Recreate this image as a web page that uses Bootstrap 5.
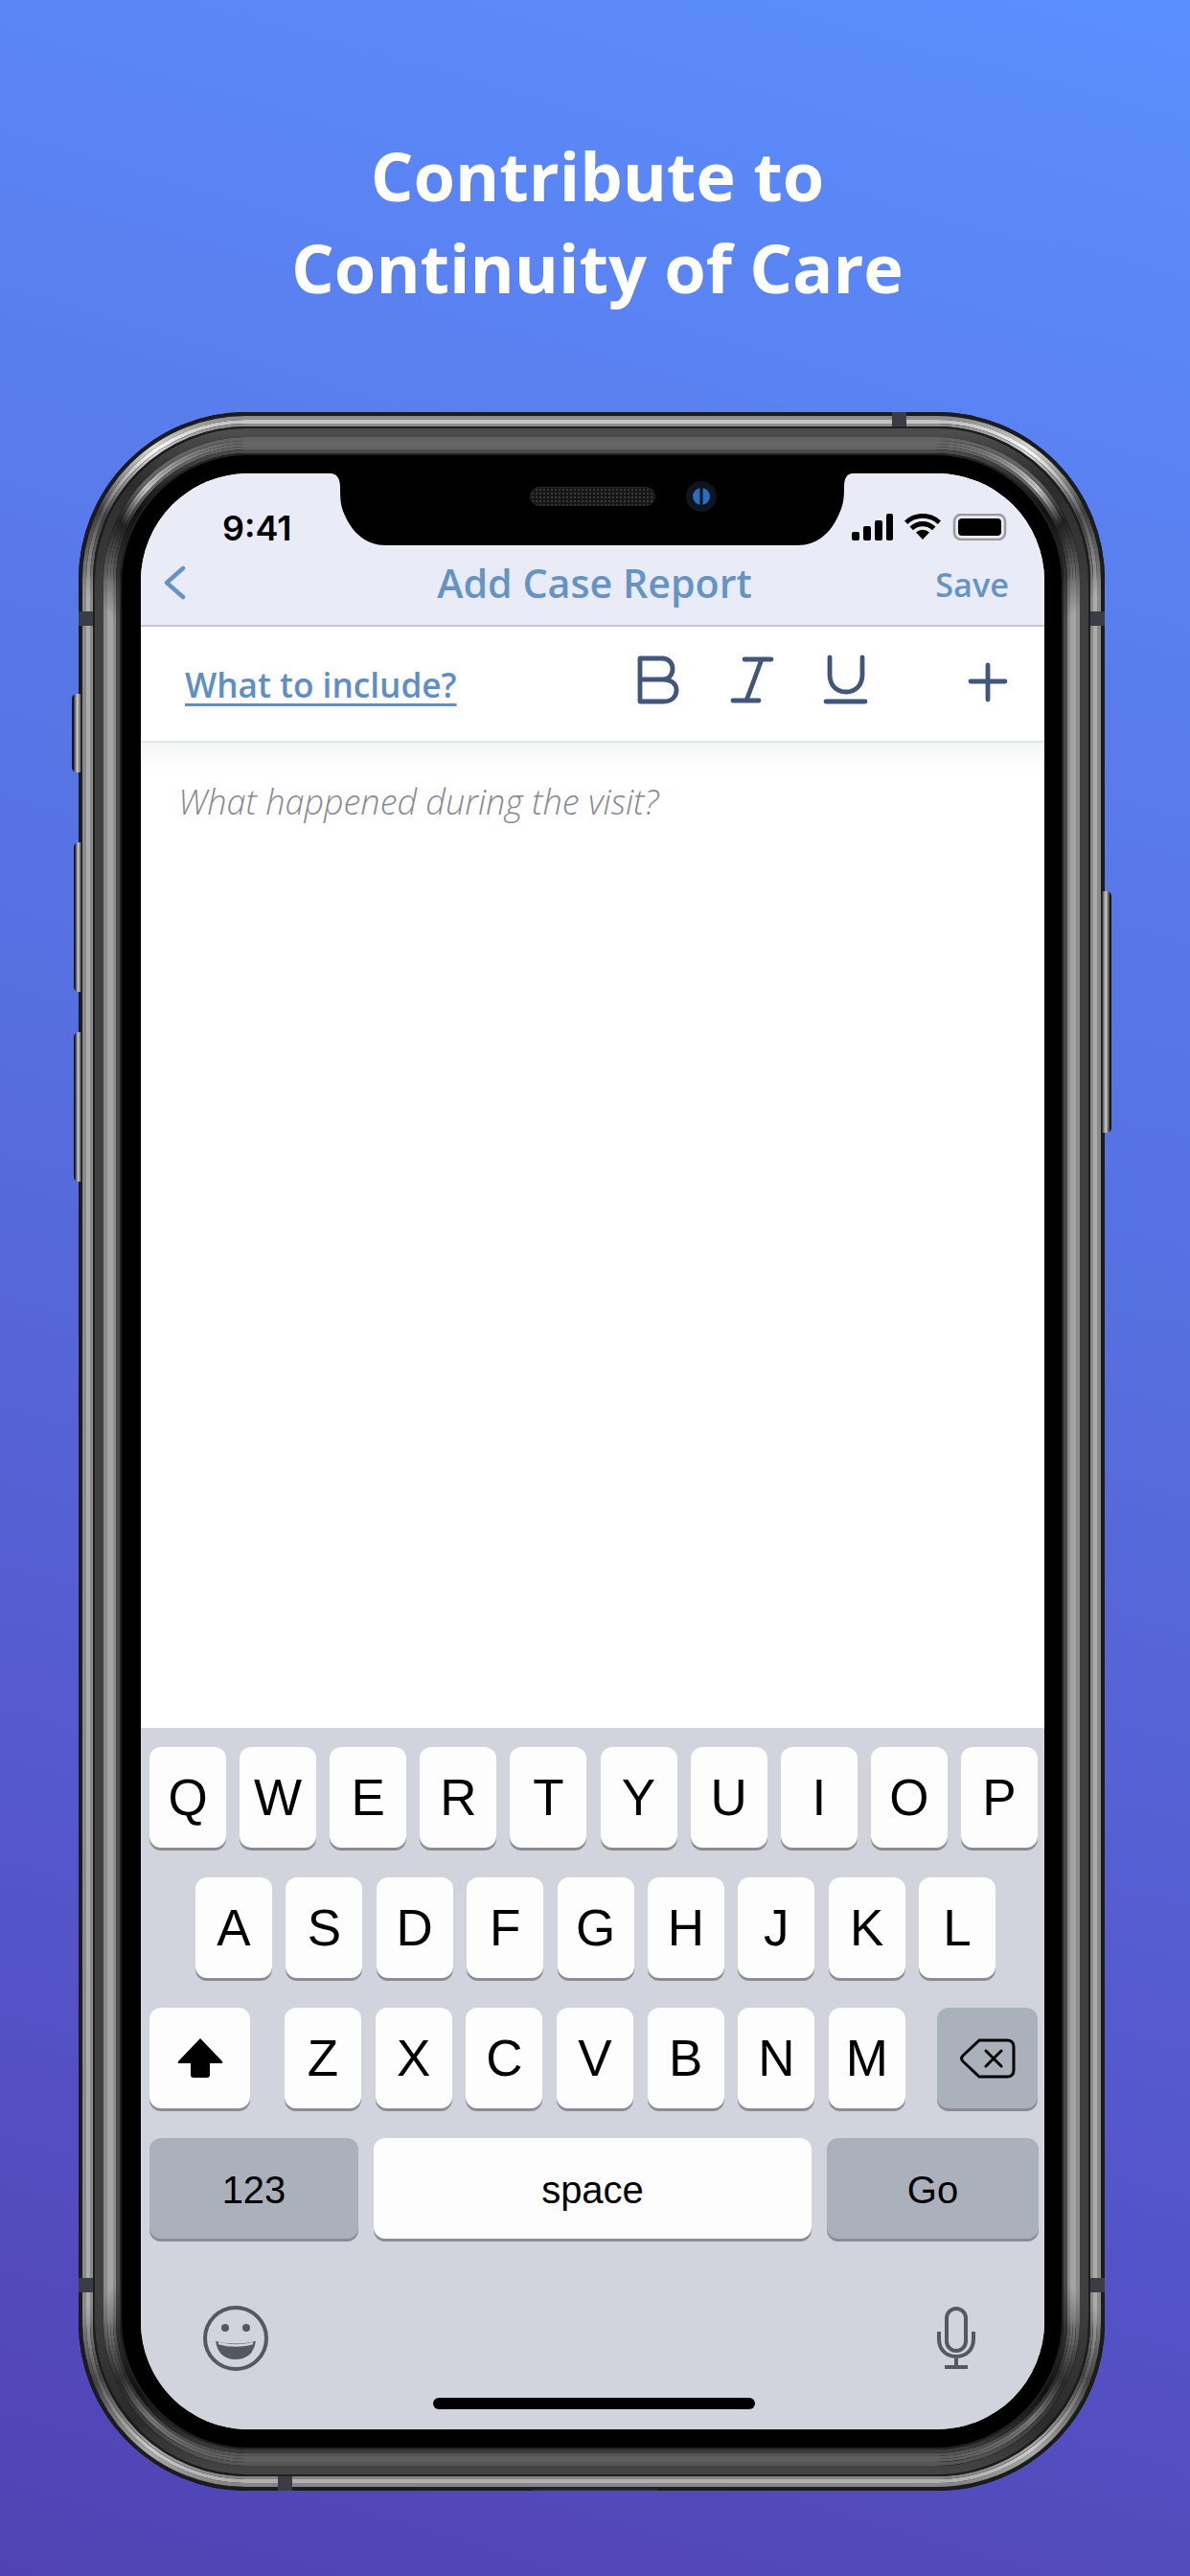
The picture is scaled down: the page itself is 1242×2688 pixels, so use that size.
<!doctype html>
<html lang="en"><head><meta charset="utf-8"><title>Add Case Report</title>
<link href="https://cdn.jsdelivr.net/npm/bootstrap@5.3.0/dist/css/bootstrap.min.css" rel="stylesheet">
<style>
html,body{margin:0;width:1242px;height:2688px;overflow:hidden}
body{background:linear-gradient(196deg,#5b8fff 0%,#5a7eee 22%,#5670e0 45%,#5558cd 72%,#5042b3 100%);font-family:"Open Sans",sans-serif}
.promo-title{padding:135px 0 0 5px;height:430px;margin:0;color:#fff;font:700 70.3px/96px "Open Sans",sans-serif;width:1242px}
.phone{width:1071px;height:2169px;margin-left:82px;padding:64px 63px 64px 65px}
.bezel{left:0;top:0}
.side-btn{background:linear-gradient(90deg,#161616 0 14%,#555 28%,#c4c4c4 55%,#8e8e8e 78%,#1c1c1c);border-radius:5px 0 0 5px}
.sb-a{left:-7px;top:294px;width:10px;height:82px}
.sb-b{left:-5px;top:449px;width:8px;height:156px}
.sb-c{left:-5px;top:647px;width:8px;height:156px}
.sb-d{right:-7px;top:500px;width:10px;height:252px;background:linear-gradient(270deg,#161616 0 14%,#555 28%,#c4c4c4 55%,#8e8e8e 78%,#1c1c1c);border-radius:0 5px 5px 0}
.screen{width:943px;height:2041px;border-radius:112px;overflow:hidden;background:#fff;color:#000}
.status-row{height:76px;background:#e9ecf7;padding:42px 39px 0 85px;font:600 36px/30px Inter,sans-serif}
.notch{left:198px;top:0;width:545px}
.speaker{left:406px;top:14px;width:131px;height:20px;border-radius:10px;border:1px solid #262626;background:#161616 radial-gradient(circle,#3a3a3a 0 1px,transparent 1.2px) 0 0/4px 4px}
.cam{left:569px;top:8px}
.title-row{height:84px;background:#e9ecf7;border-bottom:2px solid #c8c9ce;padding:0 37px 6px 23px;color:#6594c4;display:grid;grid-template-columns:1fr auto 1fr;align-items:center}
.title-row .nav-h{font:600 41.2px/56px "Open Sans",sans-serif;margin:0 0 0 18px}
.save-t{font:600 34.3px/46px "Open Sans",sans-serif;margin-top:4px;justify-self:end}
.tool-row{height:121px;border-bottom:2px solid #e3e5ea;padding:0 37px 0 46px;background:#fff}
.incl{color:#5f8fc2;font:600 35.2px/48px "Open Sans",sans-serif;text-decoration-thickness:3px;text-underline-offset:6px;margin-top:1px}
.tool-ico{stroke:#42557a;fill:none;stroke-width:4.8;stroke-linecap:round;stroke-linejoin:round;margin-bottom:7px}
.editor{height:1028px;background:linear-gradient(180deg,#f3f4f6,#fff 28px);padding:38px 0 0 39px;color:#878991;font:italic 300 36px/48px "Open Sans",sans-serif}
.kbd{height:732px;background:#d1d4dc;padding-top:20px;color:#000;font-family:"Liberation Sans",sans-serif}
.k-row{display:flex;justify-content:space-between;height:105px;margin-bottom:31px}
.r1{padding:0 7px 0 9px}.r2{padding:0 51px 0 57px}.r3{padding:0 7px 0 9px}.r4{padding:0 6px 0 9px}
.kk{width:80px;height:105px;border-radius:12px;background:#fdfdfe;box-shadow:0 3px 0 #8b8c91;font-size:53px;line-height:1;display:flex;align-items:center;justify-content:center}
.kk.dk{background:#abb1bb}
.kk.w105{width:105px}
.kk.w218,.kk.w457,.kk.w221{font-size:40px;padding-top:2px}
.kk.w218{width:218px}
.kk.w457{width:457px}
.kk.w221{width:221px}
.gap-fill{display:flex;justify-content:space-between;width:648px;margin-left:3px}
.kb-foot{padding:38px 72px 0 64px;height:100px}
.home-bar{left:305px;bottom:21px;width:336px;height:12px;border-radius:6px;background:#000}
.foot-ico{fill:none;stroke:#545860;stroke-width:4}
</style></head>
<body>
<h1 class="promo-title text-center">Contribute to<br>Continuity of Care</h1>
<div class="phone position-relative">
<svg class="bezel position-absolute" width="1071" height="2169" viewBox="0 0 1071 2169" fill="none">
<defs>
<linearGradient id="s1" x1="0" y1="0" x2="0" y2="1"><stop offset="0" stop-color="#8c8c8c"/><stop offset=".014" stop-color="#d8d8d8"/><stop offset=".045" stop-color="#3e3e3e"/><stop offset=".085" stop-color="#8a8a8a"/><stop offset=".915" stop-color="#8a8a8a"/><stop offset=".95" stop-color="#444"/><stop offset=".985" stop-color="#aaa"/><stop offset="1" stop-color="#858585"/></linearGradient>
<linearGradient id="s2" x1="0" y1="0" x2="0" y2="1"><stop offset="0" stop-color="#c4c4c4"/><stop offset=".014" stop-color="#fff"/><stop offset=".045" stop-color="#555"/><stop offset=".085" stop-color="#ababab"/><stop offset=".915" stop-color="#ababab"/><stop offset=".95" stop-color="#555"/><stop offset=".985" stop-color="#ccc"/><stop offset="1" stop-color="#b0b0b0"/></linearGradient>
<linearGradient id="b1" x1="0" y1="0" x2="0" y2="1"><stop offset="0" stop-color="#4c4c4c"/><stop offset=".025" stop-color="#2c2c2c"/><stop offset=".085" stop-color="#404040"/><stop offset=".915" stop-color="#404040"/><stop offset=".975" stop-color="#2a2a2a"/><stop offset="1" stop-color="#444"/></linearGradient>
<linearGradient id="b2" x1="0" y1="0" x2="0" y2="1"><stop offset="0" stop-color="#666"/><stop offset=".022" stop-color="#c8c8c8"/><stop offset=".04" stop-color="#222"/><stop offset=".085" stop-color="#a4a4a4"/><stop offset=".915" stop-color="#a4a4a4"/><stop offset=".96" stop-color="#333"/><stop offset=".98" stop-color="#777"/><stop offset="1" stop-color="#5e5e5e"/></linearGradient>
<linearGradient id="b3" x1="0" y1="0" x2="0" y2="1"><stop offset="0" stop-color="#626262"/><stop offset=".022" stop-color="#666"/><stop offset=".04" stop-color="#222"/><stop offset=".085" stop-color="#8c8c8c"/><stop offset=".915" stop-color="#8c8c8c"/><stop offset=".96" stop-color="#2a2a2a"/><stop offset="1" stop-color="#565656"/></linearGradient>
<linearGradient id="b4" x1="0" y1="0" x2="0" y2="1"><stop offset="0" stop-color="#4a4a4a"/><stop offset=".03" stop-color="#111"/><stop offset=".085" stop-color="#4a4a4a"/><stop offset=".915" stop-color="#4a4a4a"/><stop offset=".97" stop-color="#111"/><stop offset="1" stop-color="#3c3c3c"/></linearGradient>
</defs>
<rect x="0" y="0" width="1071" height="2169" rx="175" fill="#000"/>
<rect x="2" y="2" width="1067" height="2165" rx="173" stroke="#1c1c1e" stroke-width="4"/>
<rect x="6" y="6" width="1059" height="2157" rx="169" stroke="url(#s1)" stroke-width="4"/>
<rect x="10" y="10" width="1051" height="2149" rx="165" stroke="url(#s2)" stroke-width="4"/>
<rect x="13.5" y="13.5" width="1044" height="2142" rx="162" stroke="url(#s1)" stroke-width="3"/>
<rect x="16" y="16" width="1039" height="2137" rx="159" stroke="#1e1e1e" stroke-width="2"/>
<rect x="21.5" y="21.5" width="1028" height="2126" rx="154" stroke="url(#b1)" stroke-width="9"/>
<rect x="28" y="28" width="1015" height="2113" rx="148" stroke="url(#b3)" stroke-width="4"/>
<rect x="31.5" y="31.5" width="1008" height="2106" rx="145" stroke="url(#b2)" stroke-width="3"/>
<rect x="34.5" y="34.5" width="1002" height="2100" rx="142" stroke="url(#b2)" stroke-width="3"/>
<rect x="37.5" y="37.5" width="996" height="2094" rx="139" stroke="url(#b3)" stroke-width="3"/>
<rect x="41" y="41" width="989" height="2087" rx="136" stroke="url(#b4)" stroke-width="4"/>
<rect x="44" y="44" width="983" height="2081" rx="133" stroke="#222" stroke-width="2"/>
<g fill="#3a3d45"><rect x="0" y="208" width="15" height="15"/><rect x="1056" y="208" width="15" height="15"/><rect x="0" y="1947" width="15" height="15"/><rect x="1056" y="1947" width="15" height="15"/><rect x="849" y="0" width="15" height="15"/><rect x="208" y="2154" width="15" height="15"/></g>
<rect x="474" y="2167" width="130" height="2" fill="#2a2a30"/>
</svg>
<div class="side-btn position-absolute sb-a"></div>
<div class="side-btn position-absolute sb-b"></div>
<div class="side-btn position-absolute sb-c"></div>
<div class="side-btn position-absolute sb-d"></div>

<div class="screen position-relative">
  <div class="status-row d-flex justify-content-between align-items-start">
    <span>9:41</span>
    <svg width="162" height="28" viewBox="0 0 162 28" fill="#000">
      <rect x="0" y="19" width="8" height="9" rx="2"/><rect x="12" y="13" width="8" height="15" rx="2"/><rect x="24" y="7" width="8" height="21" rx="2"/><rect x="36" y="0" width="7" height="28" rx="2"/>
      <path d="M74 27l-7-7.500a10 10 0 0 1 14 0zM60.500 13.500a19.500 19.500 0 0 1 27 0l-3.500 3.700a14.500 14.500 0 0 0-20 0zM55 7.500a27.500 27.500 0 0 1 38 0l-3.200 3.500a23 23 0 0 0-31.600 0z"/>
      <rect x="107" y="1" width="53" height="26" rx="7" fill="none" stroke="#9a9aa0" stroke-width="2.500"/><rect x="111" y="5" width="45" height="18" rx="4"/><path d="M162 10c2 1 2.500 3 2.500 4s-.5 3-2.500 4z" fill="#9a9aa0"/>
    </svg>
  </div>
  <svg class="notch position-absolute" width="545" height="76" viewBox="0 0 545 76" fill="#000"><path d="M0 0H545C539 0 536 5 536 14C536 30 534 35 530 44C522 62 508 75 487 75H58C37 75 23 62 15 44C11 35 10 30 10 14C10 5 6 0 0 0Z"/></svg>
  <div class="speaker position-absolute"></div>
  <svg class="cam position-absolute" width="32" height="32" viewBox="0 0 32 32"><circle cx="16" cy="16" r="16" fill="#0e1520"/><circle cx="16" cy="16" r="9" fill="#2a6fbd"/><rect x="14.500" y="7" width="3" height="18" fill="#0a1220"/></svg>
  <nav class="title-row">
    <svg width="24" height="36" viewBox="0 0 24 36" fill="none"><path d="M21 3L4 18l17 15" stroke="#6594c4" stroke-width="4.500" stroke-linecap="round" stroke-linejoin="round"/></svg>
    <h2 class="nav-h">Add Case Report</h2>
    <span class="save-t">Save</span>
  </nav>
  <div class="tool-row d-flex justify-content-between align-items-center">
    <a class="incl" href="#">What to include?</a>
    <svg width="388" height="56" viewBox="0 0 388 56" class="tool-ico">
      <path d="M3 50V5H26C33 5 37 10 37 16C37 22 33 27 27 27H3M27 27C36 27 41 32 41 38C41 45 36 50 28 50H3"/>
      <path d="M112 6H140M130 6L114 49M100 49H127"/>
      <path d="M201 4V22C201 33 208 40 218 40C228 40 235 33 235 22V4M197 50H238"/>
      <path d="M348 29H384M366 12V48"/>
    </svg>
  </div>
  <div class="editor">What happened during the visit?</div>
  <div class="kbd position-relative">
    <div class="k-row r1"><div class="kk">Q</div><div class="kk">W</div><div class="kk">E</div><div class="kk">R</div><div class="kk">T</div><div class="kk">Y</div><div class="kk">U</div><div class="kk">I</div><div class="kk">O</div><div class="kk">P</div></div>
    <div class="k-row r2"><div class="kk">A</div><div class="kk">S</div><div class="kk">D</div><div class="kk">F</div><div class="kk">G</div><div class="kk">H</div><div class="kk">J</div><div class="kk">K</div><div class="kk">L</div></div>
    <div class="k-row r3">
      <div class="kk w105"><svg width="48" height="42" viewBox="0 0 48 42" fill="#000"><path d="M24 0L47 24Q48 26 46 26H34V38Q34 41 31 41H17Q14 41 14 38V26H2Q0 26 1 24Z"/></svg></div>
      <div class="gap-fill"><div class="kk">Z</div><div class="kk">X</div><div class="kk">C</div><div class="kk">V</div><div class="kk">B</div><div class="kk">N</div><div class="kk">M</div></div>
      <div class="kk dk w105"><svg width="58" height="42" viewBox="0 0 58 42" fill="none" stroke="#000" stroke-width="3" stroke-linejoin="round" stroke-linecap="round"><path d="M20 2H49Q56 2 56 9V33Q56 40 49 40H20L3 24Q0 21 3 18ZM27 13L43 29M43 13L27 29"/></svg></div>
    </div>
    <div class="k-row r4"><div class="kk dk w218">123</div><div class="kk w457">space</div><div class="kk dk w221">Go</div></div>
    <div class="kb-foot d-flex justify-content-between align-items-start">
      <svg width="70" height="70" viewBox="0 0 70 70" class="foot-ico"><circle cx="35" cy="35" r="32"/><circle cx="24" cy="24" r="4" fill="#545860" stroke="none"/><circle cx="46" cy="24" r="4" fill="#545860" stroke="none"/><path d="M14 38Q35 43 56 38Q53 57 35 57Q17 57 14 38Z" fill="#545860" stroke="none"/><path d="M17 40Q35 45 53 40" stroke="#d1d4dc" stroke-width="2.500"/></svg>
      <svg width="40" height="66" viewBox="0 0 40 66" class="foot-ico" style="margin-top:2px"><rect x="10" y="2" width="20" height="44" rx="10"/><path d="M2 26V34C2 45 10 52 20 52C30 52 38 45 38 34V26M20 52V63M8 63H32" stroke-width="4"/></svg>
    </div>
    <div class="home-bar position-absolute"></div>
  </div>
</div>
</div>
</body></html>
